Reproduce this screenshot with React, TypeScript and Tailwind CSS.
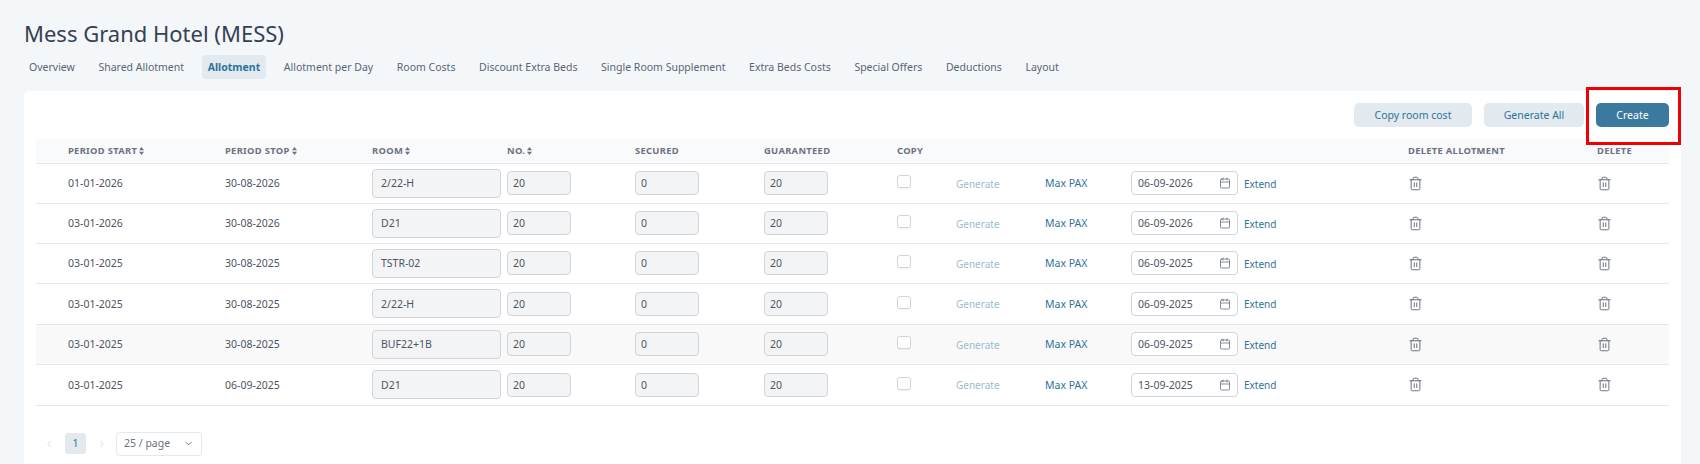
import { Calendar, ChevronDown, ChevronLeft, ChevronRight, Trash2 } from "lucide-react";

const tabs = [
  "Overview",
  "Shared Allotment",
  "Allotment",
  "Allotment per Day",
  "Room Costs",
  "Discount Extra Beds",
  "Single Room Supplement",
  "Extra Beds Costs",
  "Special Offers",
  "Deductions",
  "Layout",
];

const rows = [
  { start: "01-01-2026", stop: "30-08-2026", room: "2/22-H", extend: "06-09-2026", height: "h-[40px]" },
  { start: "03-01-2026", stop: "30-08-2026", room: "D21", extend: "06-09-2026", height: "h-[40px]" },
  { start: "03-01-2025", stop: "30-08-2025", room: "TSTR-02", extend: "06-09-2025", height: "h-[40px]" },
  { start: "03-01-2025", stop: "30-08-2025", room: "2/22-H", extend: "06-09-2025", height: "h-[41px]" },
  { start: "03-01-2025", stop: "30-08-2025", room: "BUF22+1B", extend: "06-09-2025", height: "h-[40px] bg-[#f9f9f9]" },
  { start: "03-01-2025", stop: "06-09-2025", room: "D21", extend: "13-09-2025", height: "h-[41px]" },
];

function SortIcon() {
  return (
    <svg width="5" height="8" viewBox="0 0 5 8" className="ml-[2px] inline-block align-[-0.5px]" fill="#6b7280">
      <path d="M2.5 0 5 3.2H0z" />
      <path d="M2.5 8 0 4.8h5z" />
    </svg>
  );
}

function Head({ label, sort }: { label?: string; sort?: boolean }) {
  return (
    <span className="block pt-[1px] text-[9.4px] font-bold tracking-[0.3px] whitespace-nowrap text-[#6b7280] uppercase">
      {label}
      {sort && <SortIcon />}
    </span>
  );
}

function ReadOnlyInput({ value, className }: { value: string; className: string }) {
  return (
    <input
      readOnly
      value={value}
      className={`block rounded-[4px] border border-[#d1d5db] bg-[#f3f4f6] text-[10.5px] text-[#4b5563] outline-none ${className}`}
    />
  );
}

export default function App() {
  return (
    <div className="h-[464px] overflow-hidden bg-[#f4f7fa] pt-[19px] pl-[24px] font-['Noto_Sans',sans-serif] text-[10.5px] text-[#4b5563]">
      <h1 className="h-[29px] text-[22px] leading-[29px] font-normal text-[#374151]">Mess Grand Hotel (MESS)</h1>

      <div className="mt-[7px] -ml-[1px] flex gap-[11.6px]">
        {tabs.map((tab) =>
          tab === "Allotment" ? (
            <div key={tab} className="flex h-[24px] items-center rounded-[4px] bg-[#e2eaef] px-[6px] pt-[1px] font-bold text-[#2f7299]">
              {tab}
            </div>
          ) : (
            <div key={tab} className="flex h-[24px] items-center px-[6px] pt-[1px] text-[#5b6472]">
              {tab}
            </div>
          )
        )}
      </div>

      {/* Card */}
      <div className="relative mt-[12px] h-[400px] w-[1657px] rounded-t-[6px] bg-white px-[12px] pt-[12px]">
        <div className="flex justify-end gap-[12px]">
          <button className="h-[24px] w-[118px] rounded-[5px] bg-[#e2eaef] pt-[1px] text-[#2f7299]">Copy room cost</button>
          <button className="h-[24px] w-[100px] rounded-[5px] bg-[#e2eaef] pt-[1px] text-[#2f7299]">Generate All</button>
          <button className="h-[24px] w-[73px] rounded-[5px] bg-[#3b7a9e] pt-[1px] text-white">Create</button>
        </div>

        {/* Red annotation round the Create button */}
        <div className="absolute top-[-4px] right-0 h-[58px] w-[95px] border-[3px] border-[#f00000]" />

        <table className="mt-[12px] w-[1633px] table-fixed border-collapse">
          <colgroup>
            <col className="w-[189px]" />
            <col className="w-[147px]" />
            <col className="w-[135px]" />
            <col className="w-[128px]" />
            <col className="w-[129px]" />
            <col className="w-[133px]" />
            <col className="w-[59px]" />
            <col className="w-[89px]" />
            <col className="w-[86px]" />
            <col className="w-[277px]" />
            <col className="w-[189px]" />
            <col className="w-[72px]" />
          </colgroup>
          <thead>
            <tr className="h-[24px] border-b border-[#e5e7eb] bg-[#f9fafb] text-left">
              <th className="pl-[32px]"><Head label="Period start" sort /></th>
              <th><Head label="Period stop" sort /></th>
              <th><Head label="Room" sort /></th>
              <th><Head label="No." sort /></th>
              <th><Head label="Secured" /></th>
              <th><Head label="Guaranteed" /></th>
              <th><Head label="Copy" /></th>
              <th />
              <th />
              <th />
              <th><Head label="Delete allotment" /></th>
              <th><Head label="Delete" /></th>
            </tr>
          </thead>
          <tbody>
            {rows.map((row, index) => (
              <tr key={index} className={`border-b border-[#e5e7eb] ${row.height}`}>
                <td className="pt-[2px] pl-[32px]">{row.start}</td>
                <td className="pt-[2px]">{row.stop}</td>
                <td>
                  <ReadOnlyInput value={row.room} className="h-[29px] w-[129px] pl-[8px]" />
                </td>
                <td>
                  <ReadOnlyInput value="20" className="h-[24px] w-[64px] pl-[5px]" />
                </td>
                <td>
                  <ReadOnlyInput value="0" className="h-[24px] w-[64px] pl-[5px]" />
                </td>
                <td>
                  <ReadOnlyInput value="20" className="h-[24px] w-[64px] pl-[5px]" />
                </td>
                <td>
                  <div className="mb-[3px] h-[13px] w-[14px] rounded-[3px] border border-[#d1d5db] bg-white shadow-[0_1px_1px_rgba(0,0,0,0.06)]" />
                </td>
                <td className="pt-[2px] text-[10px] text-[#9bbccd]">Generate</td>
                <td className="pt-[2px] text-[#2f7299]">Max PAX</td>
                <td>
                  <div className="flex items-center gap-[6px]">
                    <div className="relative">
                      <input
                        readOnly
                        value={row.extend}
                        className="block h-[24px] w-[107px] rounded-[4px] border border-[#d1d5db] bg-white pl-[6px] text-[10.5px] text-[#4b5563] outline-none"
                      />
                      <Calendar size={12} strokeWidth={1.6} className="absolute top-[6px] right-[7px] text-[#6b7280]" />
                    </div>
                    <span className="pt-[2px] text-[10px] text-[#2f7299]">Extend</span>
                  </div>
                </td>
                <td>
                  <Trash2 size={15} strokeWidth={1.6} className="text-[#6b7280]" />
                </td>
                <td>
                  <Trash2 size={15} strokeWidth={1.6} className="text-[#6b7280]" />
                </td>
              </tr>
            ))}
          </tbody>
        </table>

        {/* Pagination */}
        <div className="mt-[26px] flex items-center pl-[8px]">
          <ChevronLeft size={10} className="text-[#d1d5db]" />
          <div className="ml-[11px] flex h-[21px] w-[21px] items-center justify-center rounded-[3px] bg-[#e2eaef] text-[#2f7299]">1</div>
          <ChevronRight size={10} className="ml-[11px] text-[#d1d5db]" />
          <div className="ml-[9px] flex h-[24px] w-[86px] items-center justify-between rounded-[4px] border border-[#e5e7eb] bg-white px-[7px] text-[#6b7280]">
            25 / page
            <ChevronDown size={11} strokeWidth={2} className="text-[#6b7280]" />
          </div>
        </div>
      </div>
    </div>
  );
}
